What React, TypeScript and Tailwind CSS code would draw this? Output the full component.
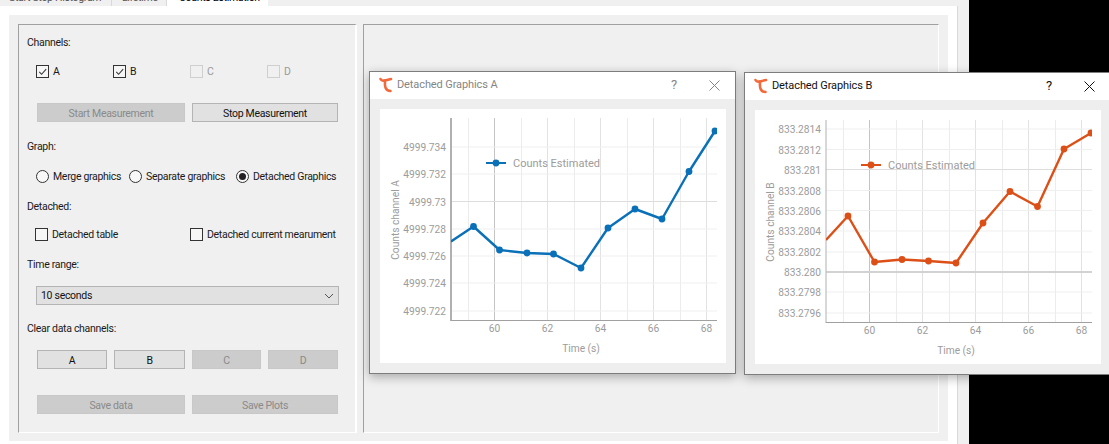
const checkMark = "M2.5 6.5 L5 9 L10 3.5";

function CheckBox({ label, checked, disabled }: { label: string; checked?: boolean; disabled?: boolean }) {
  return (
    <div className={`flex items-center gap-[4px] whitespace-nowrap ${disabled ? "text-[#9a9a9a]" : "text-[#1a1a1a]"}`}>
      <span className={`w-[13px] h-[13px] border ${disabled ? "border-[#cfcfcf] bg-[#f0f0f0]" : "border-[#333333] bg-[#f6f6f6]"}`}>
        {checked && (
          <svg width="11" height="11" viewBox="0 0 12 12" fill="none" stroke="#333333" strokeWidth="1.1">
            <path d={checkMark} />
          </svg>
        )}
      </span>
      <span className="pt-[1px]">{label}</span>
    </div>
  );
}

function Radio({ label, checked, className }: { label: string; checked?: boolean; className?: string }) {
  return (
    <div className={`flex items-center gap-[4px] whitespace-nowrap ${className ?? ""}`}>
      <span className="w-[13px] h-[13px] rounded-full border border-[#333333] bg-[#f8f8f8] flex items-center justify-center">
        {checked && <span className="w-[7px] h-[7px] rounded-full bg-[#222222]" />}
      </span>
      <span className="pt-[1px]">{label}</span>
    </div>
  );
}

function Btn({ label, disabled, className }: { label: string; disabled?: boolean; className?: string }) {
  return (
    <div
      className={`h-[19px] pt-[2px] flex items-center justify-center border ${
        disabled ? "bg-[#cccccc] border-[#c8c8c8] text-[#8a8a8a]" : "bg-[#e1e1e1] border-[#b4b4b4] text-[#111111]"
      } ${className ?? ""}`}
    >
      {label}
    </div>
  );
}

function Label({ text, className }: { text: string; className?: string }) {
  return <div className={`h-[20px] pt-[2px] flex items-center pl-[8px] ${className ?? ""}`}>{text}</div>;
}

function ControlPanel() {
  return (
    <div className="w-[339px] h-[409px] border-t border-l border-t-[#a0a0a0] border-l-[#a0a0a0] border-r-2 border-b border-r-white border-b-white pt-[7px]">
      <Label text="Channels:" />
      <div className="h-[20px] mt-[9px] ml-[17px] w-[308px] grid grid-cols-4 items-center">
        <CheckBox label="A" checked />
        <CheckBox label="B" checked />
        <CheckBox label="C" disabled />
        <CheckBox label="D" disabled />
      </div>
      <div className="mt-[22px] ml-[18px] flex gap-[7px]">
        <Btn label="Start Measurement" disabled className="w-[148px]" />
        <Btn label="Stop Measurement" className="w-[146px]" />
      </div>
      <Label text="Graph:" className="mt-[14px]" />
      <div className="h-[20px] mt-[10px] ml-[17px] flex items-center">
        <Radio label="Merge graphics" className="w-[93px]" />
        <Radio label="Separate graphics" className="w-[107px]" />
        <Radio label="Detached Graphics" checked />
      </div>
      <Label text="Detached:" className="mt-[10px]" />
      <div className="h-[20px] mt-[8px] ml-[16px] flex items-center">
        <div className="w-[155px]">
          <CheckBox label="Detached table" />
        </div>
        <CheckBox label="Detached current mearument" />
      </div>
      <Label text="Time range:" className="mt-[10px]" />
      <div className="mt-[12px] ml-[17px] w-[303px] h-[19px] pt-[1px] bg-[#e1e1e1] border border-[#b4b4b4] flex items-center justify-between pl-[4px] pr-[4px] text-[#111111]">
        <span>10 seconds</span>
        <svg width="10" height="6" viewBox="0 0 10 6" fill="none" stroke="#555555" strokeWidth="1">
          <path d="M1 1 L5 5 L9 1" />
        </svg>
      </div>
      <Label text="Clear data channels:" className="mt-[13px]" />
      <div className="mt-[12px] ml-[18px] flex gap-[7px]">
        <Btn label="A" className="w-[70px]" />
        <Btn label="B" className="w-[71px]" />
        <Btn label="C" disabled className="w-[69px]" />
        <Btn label="D" disabled className="w-[70px]" />
      </div>
      <div className="mt-[26px] ml-[18px] flex gap-[7px]">
        <Btn label="Save data" disabled className="w-[148px]" />
        <Btn label="Save Plots" disabled className="w-[146px]" />
      </div>
    </div>
  );
}

type ChartConfig = {
  id: string;
  color: string;
  box: [number, number]; // page position of the white panel
  left: number;
  right: number;
  top: number;
  bottom: number;
  yLabel: string;
  yTicks: { label: string; y: number; color?: string; width?: number }[];
  xTicks: { label: string; x: number; color?: string }[];
  xMinor: number[];
  points: [number, number][];
  legendY: number;
  legendX: number;
  axisWidth: number;
};

const chartA: ChartConfig = {
  id: "plot-a",
  color: "#0a70b8",
  box: [380, 109],
  left: 451,
  right: 717,
  top: 118,
  bottom: 320,
  yLabel: "Counts channel A",
  yTicks: [
    { label: "4999.734", y: 147 },
    { label: "4999.732", y: 174 },
    { label: "4999.73", y: 201.5, color: "#dddddd" },
    { label: "4999.728", y: 229 },
    { label: "4999.726", y: 256 },
    { label: "4999.724", y: 283 },
    { label: "4999.722", y: 311 },
  ],
  xTicks: [
    { label: "60", x: 494.5, color: "#c4c4c4" },
    { label: "62", x: 547.5 },
    { label: "64", x: 600.5 },
    { label: "66", x: 653.5 },
    { label: "68", x: 706.5 },
  ],
  xMinor: [468.5, 521.5, 574.5, 627.5, 680.5],
  points: [
    [451, 241.5],
    [473.5, 226.5],
    [499.5, 250],
    [527, 253],
    [553.5, 254],
    [581, 268],
    [608, 228],
    [635, 209],
    [662, 219],
    [689, 171.5],
    [715, 131],
  ],
  legendY: 163,
  legendX: 486,
  axisWidth: 2,
};

const chartB: ChartConfig = {
  id: "plot-b",
  color: "#dc5018",
  box: [755, 110],
  left: 826,
  right: 1092,
  top: 120,
  bottom: 322,
  yLabel: "Counts channel B",
  yTicks: [
    { label: "833.2814", y: 129 },
    { label: "833.2812", y: 149.5 },
    { label: "833.281", y: 169.5, color: "#dddddd" },
    { label: "833.2808", y: 190.5 },
    { label: "833.2806", y: 210.5 },
    { label: "833.2804", y: 231 },
    { label: "833.2802", y: 252 },
    { label: "833.280", y: 272, color: "#d2d2d2", width: 2 },
    { label: "833.2798", y: 292 },
    { label: "833.2796", y: 313 },
  ],
  xTicks: [
    { label: "60", x: 869.5, color: "#c4c4c4" },
    { label: "62", x: 922.5 },
    { label: "64", x: 975.5 },
    { label: "66", x: 1028.5 },
    { label: "68", x: 1081.5 },
  ],
  xMinor: [843.5, 896.5, 949.5, 1002.5, 1055.5],
  points: [
    [826, 240],
    [848, 216],
    [874.5, 262],
    [902, 259.5],
    [928.5, 261],
    [956, 263],
    [983, 223],
    [1010, 191.5],
    [1037.5, 206.5],
    [1064, 149],
    [1091, 133],
  ],
  legendY: 165,
  legendX: 861,
  axisWidth: 1,
};

function Chart({ c }: { c: ChartConfig }) {
  const labelColor = "#9c9c9c";
  const midY = c.top + 102;
  return (
    <svg
      width="346"
      height="254"
      viewBox={`${c.box[0]} ${c.box[1]} 346 254`}
      className="bg-white tracking-normal"
      fontSize="10.2"
      fontFamily="Roboto, sans-serif"
      fill={labelColor}
    >
      <defs>
        <clipPath id={c.id}>
          <rect x={c.left} y={c.top} width={c.right - c.left} height={c.bottom - c.top} />
        </clipPath>
      </defs>
      {c.xMinor.map((x) => (
        <line key={x} x1={x} x2={x} y1={c.top} y2={c.bottom} stroke="#ececec" />
      ))}
      {c.xTicks.map((t) => (
        <line key={t.label} x1={t.x} x2={t.x} y1={c.top} y2={c.bottom} stroke={t.color ?? "#e2e2e2"} />
      ))}
      {c.yTicks.map((t) => (
        <line key={t.label} x1={c.left} x2={c.right} y1={t.y} y2={t.y} stroke={t.color ?? "#efefef"} strokeWidth={t.width ?? 1} />
      ))}
      <line x1={c.left} x2={c.left} y1={c.top} y2={c.bottom + 1} stroke="#b0b0b0" strokeWidth={c.axisWidth} />
      <line x1={c.left} x2={c.right} y1={c.bottom + 0.5} y2={c.bottom + 0.5} stroke="#a0a0a0" />
      {c.yTicks.map((t) => (
        <text key={t.label} x={c.left - 5} y={t.y + 4} textAnchor="end">
          {t.label}
        </text>
      ))}
      {c.xTicks.map((t) => (
        <text key={t.label} x={t.x} y={c.bottom + 12} textAnchor="middle">
          {t.label}
        </text>
      ))}
      <text x={c.left + 130} y={c.bottom + 32} textAnchor="middle">
        Time (s)
      </text>
      <text x={c.left - 52} y={midY} textAnchor="middle" transform={`rotate(-90 ${c.left - 52} ${midY})`}>
        {c.yLabel}
      </text>
      <g clipPath={`url(#${c.id})`}>
        <polyline
          points={c.points.map((p) => p.join(",")).join(" ")}
          fill="none"
          stroke={c.color}
          strokeWidth="2.4"
          strokeLinejoin="round"
        />
        {c.points.slice(1).map((p) => (
          <circle key={p[0]} cx={p[0]} cy={p[1]} r="3.4" fill={c.color} />
        ))}
      </g>
      <line x1={c.legendX} x2={c.legendX + 20} y1={c.legendY} y2={c.legendY} stroke={c.color} strokeWidth="2" />
      <circle cx={c.legendX + 10} cy={c.legendY} r="3.4" fill={c.color} />
      <text x={c.legendX + 27} y={c.legendY + 4} fontSize="11">
        Counts Estimated
      </text>
    </svg>
  );
}

function Logo() {
  return (
    <svg width="14" height="16" viewBox="0 0 14 16" fill="none" stroke="#f26a3c" strokeWidth="2.6" strokeLinecap="round">
      <path d="M1.5 2 C2.5 4 4 4 6 3.4 L12 2" />
      <path d="M6 3.6 C5.6 9 6 14 11.5 14" />
    </svg>
  );
}

function DetachedWindow({ title, active, c, className }: { title: string; active?: boolean; c: ChartConfig; className: string }) {
  const fg = active ? "#111111" : "#858585";
  return (
    <div className={`absolute border border-[#7d7d7d] bg-[#eeeeee] shadow-[0_3px_10px_rgba(0,0,0,0.3)] w-[367px] h-[303px] ${className}`}>
      <div className="h-[27px] pb-[1px] bg-white flex items-center pl-[9px] gap-[4px] text-[11px] tracking-[-0.1px]" style={{ color: fg }}>
        <Logo />
        <span>{title}</span>
        <span className="ml-auto text-[13px]">?</span>
        <svg className="ml-[28px] mr-[15px]" width="11" height="11" viewBox="0 0 11 11" stroke={fg} strokeWidth="1">
          <path d="M0.5 0.5 L10.5 10.5 M10.5 0.5 L0.5 10.5" />
        </svg>
      </div>
      <div className="pt-[10px] pl-[10px]">
        <Chart c={c} />
      </div>
    </div>
  );
}

export default function App() {
  return (
    <div className="relative w-[1109px] h-[444px] overflow-hidden bg-black font-['Roboto',sans-serif] text-[10.5px] tracking-[-0.3px] text-[#1a1a1a]">
      <div className="w-[969px] h-full bg-[#f0f0f0]">
        <div className="h-[6px] flex overflow-hidden text-[#555555] whitespace-nowrap">
          <div className="w-[112px] pl-[9px] border-r border-[#d9d9d9]">
            <div className="-mt-[9px] leading-[14px]">Start Stop Histogram</div>
          </div>
          <div className="w-[55px] pl-[10px] border-r border-[#d9d9d9]">
            <div className="-mt-[9px] leading-[14px]">Lifetime</div>
          </div>
          <div className="w-[101px] pl-[12px] bg-white text-black">
            <div className="-mt-[9px] leading-[14px]">Counts Estimation</div>
          </div>
        </div>
        <div className="w-[958px] h-[438px] bg-white border-r border-[#d9d9d9] pt-[9px] pl-[9px]">
          <div className="w-[939px] h-[426px] bg-[#f0f0f0] pt-[9px] pl-[9px] flex gap-[6px]">
            <ControlPanel />
            <div className="w-[576px] h-[409px] border-t border-l border-t-[#a0a0a0] border-l-[#a0a0a0] border-r border-b border-r-white border-b-white" />
          </div>
        </div>
      </div>
      <DetachedWindow title="Detached Graphics A" c={chartA} className="left-[369px] top-[71px]" />
      <DetachedWindow title="Detached Graphics B" active c={chartB} className="left-[744px] top-[72px]" />
    </div>
  );
}
